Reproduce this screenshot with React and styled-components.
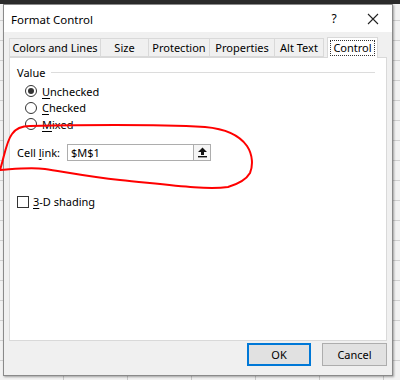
import React from 'react';
import styled, {createGlobalStyle} from 'styled-components';

const GlobalStyle = createGlobalStyle`
  html, body {
    margin: 0;
    padding: 0;
  }
  body {
    font-family: "Noto Sans", "Open Sans", sans-serif;
    color: #000;
  }
`;

/* spreadsheet peeking out behind the dialog */
const Screen = styled.div`
  position: relative;
  width: 400px;
  height: 380px;
  overflow: hidden;
  box-sizing: border-box;
  padding: 4px 0 0 3px;
  background:
    linear-gradient(#2b2b2b 0 4px, transparent 4px),
    repeating-linear-gradient(90deg, transparent 0 63px, #c8c8c8 63px 64px),
    repeating-linear-gradient(0deg, transparent 0 19px, #d0d0d0 19px 20px),
    #f2f2f2;
`;

const Dialog = styled.div`
  width: 390px;
  height: 372px;
  box-sizing: border-box;
  border: 1px solid #8a8a8a;
  background: #f0f0f0;
  display: flex;
  flex-direction: column;
  box-shadow: 1px 1px 2px rgba(0, 0, 0, 0.35);
  font-size: 11px;
  white-space: nowrap;
`;

const TitleBar = styled.div`
  height: 27px;
  background: #fff;
  display: flex;
  align-items: center;
  padding-left: 7px;
  font-size: 11.5px;
`;

const Title = styled.div`
  flex: 1;
  padding-top: 1px;
`;

const Help = styled.div`
  width: 20px;
  text-align: center;
  font-size: 12px;
  margin-right: 10px;
`;

const Close = styled.div`
  width: 38px;
  display: flex;
  justify-content: center;
  align-items: center;
`;

const Body = styled.div`
  flex: 1;
  padding: 5px 5px 0 5px;
  display: flex;
  flex-direction: column;
`;

const TabRow = styled.div`
  display: flex;
  align-items: flex-end;
  height: 20px;
  position: relative;
  z-index: 1;
`;

const Tab = styled.div`
  width: ${p => p.w}px;
  height: ${p => (p.active ? 21 : 19)}px;
  box-sizing: border-box;
  border: 1px solid #d9d9d9;
  border-bottom: ${p => (p.active ? 'none' : '1px solid #d9d9d9')};
  border-left: ${p => (p.first || p.active ? '1px solid #d9d9d9' : 'none')};
  background: ${p => (p.active ? '#fff' : '#f0f0f0')};
  margin-left: ${p => (p.active ? 3 : 0)}px;
  margin-bottom: ${p => (p.active ? -1 : 0)}px;
  display: flex;
  align-items: center;
  justify-content: center;
  padding-bottom: 1px;
`;

const Focus = styled.span`
  border: 1px dotted #333;
  padding: 0 2px;
  line-height: 14px;
`;

const Panel = styled.div`
  height: 284px;
  box-sizing: border-box;
  background: #fff;
  border: 1px solid #d9d9d9;
  padding: 6px 6px 0 7px;
`;

const GroupHead = styled.div`
  display: flex;
  align-items: center;
  gap: 6px;
  height: 17px;
  &::after {
    content: '';
    flex: 1;
    height: 1px;
    background: #dcdcdc;
    margin-right: 5px;
  }
`;

const Options = styled.div`
  display: flex;
  flex-direction: column;
  padding: 2px 0 0 8px;
`;

const OptionRow = styled.label`
  display: flex;
  align-items: center;
  gap: 5px;
  height: 16.5px;
`;

const Radio = styled.span`
  width: 12px;
  height: 12px;
  box-sizing: border-box;
  border: 1px solid #333;
  border-radius: 50%;
  display: flex;
  align-items: center;
  justify-content: center;
  &::after {
    content: '';
    width: 6px;
    height: 6px;
    border-radius: 50%;
    background: ${p => (p.checked ? '#333' : 'transparent')};
  }
`;

const Key = styled.span`
  text-decoration: underline;
  text-underline-offset: 2px;
`;

const LinkRow = styled.div`
  display: flex;
  align-items: center;
  gap: 7px;
  margin-top: 11px;
  height: 18px;
`;

const Field = styled.div`
  width: 144px;
  height: 17px;
  box-sizing: border-box;
  border: 1px solid #adadad;
  display: flex;
  align-items: center;
`;

const FieldText = styled.span`
  flex: 1;
  padding-left: 3px;
`;

const PickButton = styled.span`
  width: 17px;
  height: 15px;
  box-sizing: border-box;
  border-left: 1px solid #adadad;
  background: #f5f5f5;
  display: flex;
  align-items: center;
  justify-content: center;
`;

const CheckRow = styled.label`
  display: flex;
  align-items: center;
  gap: 4px;
  margin-top: 32px;
  height: 16px;
`;

const Box = styled.span`
  width: 12px;
  height: 12px;
  box-sizing: border-box;
  border: 1px solid #333;
`;

const Footer = styled.div`
  display: flex;
  justify-content: flex-end;
  gap: 11px;
  padding-top: 2px;
`;

const Button = styled.div`
  width: ${p => p.w}px;
  height: 23px;
  box-sizing: border-box;
  background: #e1e1e1;
  border: ${p => (p.primary ? '2px solid #0078d7' : '1px solid #adadad')};
  display: flex;
  align-items: center;
  justify-content: center;
`;

const Scribble = styled.svg`
  position: absolute;
  left: 0;
  top: 0;
  pointer-events: none;
`;

const tabs = [
  {label: 'Colors and Lines', w: 92},
  {label: 'Size', w: 48},
  {label: 'Protection', w: 61},
  {label: 'Properties', w: 65},
  {label: 'Alt Text', w: 49},
];

const App = () => {
  return (
    <>
      <GlobalStyle/>
      <Screen>
        <Dialog>
          <TitleBar>
            <Title>Format Control</Title>
            <Help>?</Help>
            <Close>
              <svg width="12" height="12" viewBox="0 0 12 12">
                <path d="M1 1 L11 11 M11 1 L1 11" stroke="#222" strokeWidth="1.1"/>
              </svg>
            </Close>
          </TitleBar>
          <Body>
            <TabRow>
              {tabs.map((t, i) => (
                <Tab key={t.label} w={t.w} first={i === 0}>{t.label}</Tab>
              ))}
              <Tab w={51} active>
                <Focus>Control</Focus>
              </Tab>
            </TabRow>
            <Panel>
              <GroupHead>Value</GroupHead>
              <Options>
                <OptionRow><Radio checked/><span><Key>U</Key>nchecked</span></OptionRow>
                <OptionRow><Radio/><span><Key>C</Key>hecked</span></OptionRow>
                <OptionRow><Radio/><span><Key>M</Key>ixed</span></OptionRow>
              </Options>
              <LinkRow>
                <span>Cell <Key>l</Key>ink:</span>
                <Field>
                  <FieldText>$M$1</FieldText>
                  <PickButton>
                    <svg width="11" height="11" viewBox="0 0 11 11">
                      <path d="M5.5 0.5 L10 5 L7 5 L7 8 L4 8 L4 5 L1 5 Z" fill="#111"/>
                      <rect x="1" y="9" width="9" height="1.4" fill="#111"/>
                    </svg>
                  </PickButton>
                </Field>
              </LinkRow>
              <CheckRow><Box/><span><Key>3</Key>-D shading</span></CheckRow>
            </Panel>
            <Footer>
              <Button w={64} primary>OK</Button>
              <Button w={65}>Cancel</Button>
            </Footer>
          </Body>
        </Dialog>
        <Scribble width="400" height="380" viewBox="0 0 400 380">
          <path
            d="M0 170 C4 158 6 142 12 134 C16 128 22 126 30 126 C80 125 150 124 205 127 C228 129 240 136 247 146 C253 155 253 166 250 173 C246 180 238 184 228 187 C205 190 170 185 120 180 C90 177 65 172 45 169 C30 167 15 169 0 170"
            fill="none"
            stroke="#ff0000"
            strokeWidth="2"
            strokeLinecap="round"
          />
        </Scribble>
      </Screen>
    </>
  );
};

export default App;
